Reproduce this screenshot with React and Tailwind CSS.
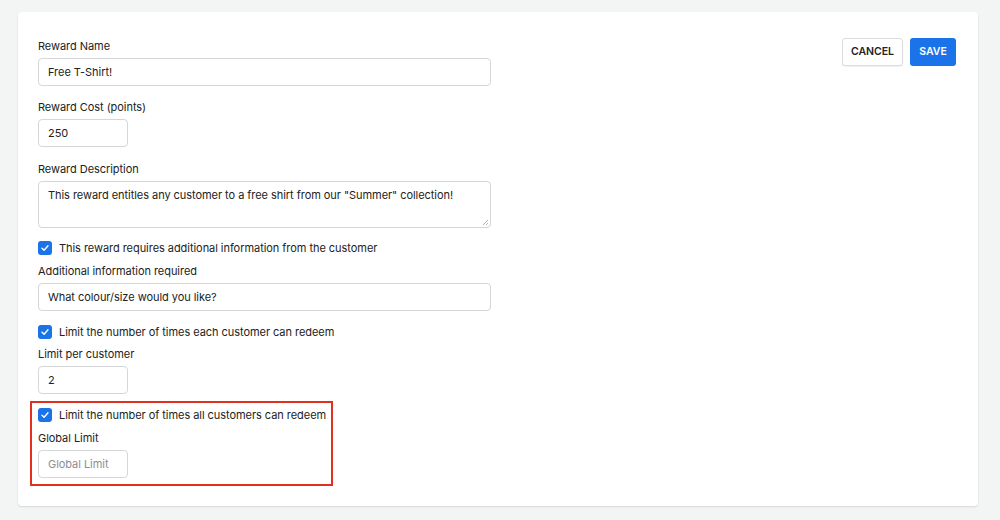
import React from "react";

const font = { fontFamily: "Inter, 'Helvetica Neue', Arial, sans-serif" };

function Label({ children }) {
  return <div className="text-[11px] leading-4 text-[#222] mb-[4px] tracking-[-0.05px]">{children}</div>;
}

function Field({ value, placeholder, className = "" }) {
  return (
    <div
      className={`h-[28px] border border-[#d4d6d8] rounded-[4px] bg-white flex items-center px-[9px] text-[11px] tracking-[-0.05px] ${className}`}
    >
      {value ? (
        <span className="text-[#222]">{value}</span>
      ) : (
        <span className="text-[#8a8f94]">{placeholder}</span>
      )}
    </div>
  );
}

function Check({ children }) {
  return (
    <div className="flex items-center gap-[7px] h-4">
      <span className="w-[14px] h-[14px] rounded-[3px] bg-[#1a73e8] flex items-center justify-center shrink-0">
        <svg width="10" height="10" viewBox="0 0 10 10" fill="none">
          <path d="M2 5.2 L4.1 7.2 L8 2.8" stroke="white" strokeWidth="1.4" strokeLinecap="round" strokeLinejoin="round" />
        </svg>
      </span>
      <span className="text-[11px] leading-4 text-[#222] whitespace-nowrap tracking-[-0.05px]">{children}</span>
    </div>
  );
}

export default function App() {
  return (
    <div className="w-[1000px] h-[520px] bg-[#f3f4f4] pt-[12px] pl-[18px] overflow-hidden" style={font}>
      <div className="w-[960px] h-[494px] bg-white rounded-[4px] shadow-[0_1px_2px_rgba(0,0,0,0.12)] pt-[26px] pl-[20px] pr-[22px] flex">
        <div className="w-[453px] flex flex-col">
          <Label>Reward Name</Label>
          <Field value="Free T-Shirt!" />

          <div className="mt-[13px]">
            <Label>Reward Cost (points)</Label>
            <Field value="250" className="w-[90px]" />
          </div>

          <div className="mt-[14px]">
            <Label>Reward Description</Label>
            <div className="relative h-[47px] border border-[#d4d6d8] rounded-[4px] px-[9px] pt-[5px] text-[11px] leading-4 text-[#222] tracking-[-0.05px]">
              This reward entitles any customer to a free shirt from our "Summer" collection!
              <svg className="absolute right-[1px] bottom-[1px]" width="7" height="7" viewBox="0 0 7 7">
                <path d="M6 1 L1 6 M6 4 L4 6" stroke="#9aa0a6" strokeWidth="0.8" />
              </svg>
            </div>
          </div>

          <div className="mt-[12px]">
            <Check>This reward requires additional information from the customer</Check>
          </div>

          <div className="mt-[7px]">
            <Label>Additional information required</Label>
            <Field value="What colour/size would you like?" />
          </div>

          <div className="mt-[13px]">
            <Check>Limit the number of times each customer can redeem</Check>
          </div>

          <div className="mt-[6px]">
            <Label>Limit per customer</Label>
            <Field value="2" className="w-[90px]" />
          </div>

          <div className="mt-[7px] -ml-[8px] w-[303px] border-2 border-[#e0301e] pl-[6px] pt-[4px] pb-[6px]">
            <Check>Limit the number of times all customers can redeem</Check>
            <div className="mt-[7px]">
              <Label>Global Limit</Label>
              <Field placeholder="Global Limit" className="w-[90px]" />
            </div>
          </div>
        </div>

        <div className="flex-1 flex justify-end items-start gap-[7px]">
          <button className="h-[28px] w-[61px] border border-[#dcdcdc] rounded-[3px] bg-white text-[10.5px] font-semibold text-[#222] shadow-[0_1px_1px_rgba(0,0,0,0.06)]">
            CANCEL
          </button>
          <button className="h-[28px] w-[46px] rounded-[3px] bg-[#1a73e8] text-[10.5px] font-semibold text-white">
            SAVE
          </button>
        </div>
      </div>
    </div>
  );
}
